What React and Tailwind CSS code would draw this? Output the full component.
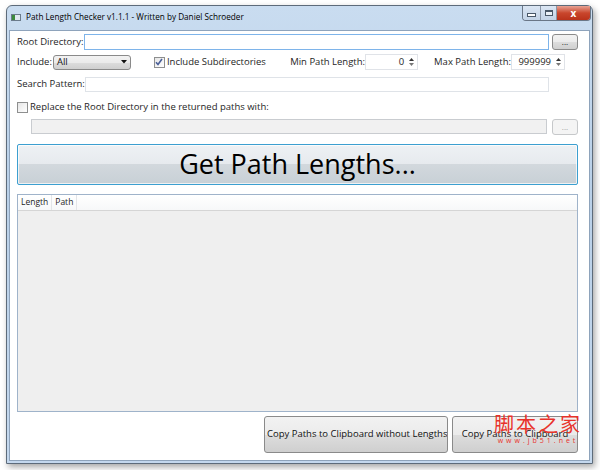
import React from "react";

function Btn({ children, className = "", disabled }) {
  return (
    <div
      className={`flex items-center justify-center rounded-[3px] border ${
        disabled
          ? "border-[#c6c8ca] bg-[#f4f4f4] text-[#a0a0a0]"
          : "border-[#8a8a8a] bg-[linear-gradient(#f2f2f2_0%,#ebebeb_50%,#dddddd_50%,#cfcfcf_100%)] text-[#111]"
      } ${className}`}
    >
      {children}
    </div>
  );
}

function TextBox({ className = "", focused, disabled }) {
  return (
    <div
      className={`h-full border ${
        focused
          ? "border-[#7eb4ea]"
          : disabled
          ? "border-[#c9ccd0] bg-[#f1f1f1]"
          : "border-[#dfe3e8]"
      } ${disabled ? "" : "bg-white"} ${className}`}
    />
  );
}

function Spinner({ value, className = "" }) {
  return (
    <div className={`flex h-[16px] shrink-0 items-center border border-[#e0e3e8] bg-white ${className}`}>
      <span className="flex-1 pr-[3px] text-right">{value}</span>
      <div className="flex w-[10px] flex-col items-center gap-[2px] pr-[2px]">
        <svg width="5" height="3" viewBox="0 0 5 3"><path d="M0 3 L2.5 0 L5 3Z" fill="#333" /></svg>
        <svg width="5" height="3" viewBox="0 0 5 3"><path d="M0 0 L2.5 3 L5 0Z" fill="#777" /></svg>
      </div>
    </div>
  );
}

function Check({ checked }) {
  return (
    <div className="flex h-[11px] w-[11px] shrink-0 items-center justify-center border border-[#8e8f8f] bg-[linear-gradient(135deg,#e6e6e6,#ffffff)]">
      {checked && (
        <svg width="8" height="8" viewBox="0 0 8 8">
          <path d="M1 4.2 L3 6.5 L7 1" stroke="#4a5f97" strokeWidth="1.6" fill="none" />
        </svg>
      )}
    </div>
  );
}

export default function App() {
  return (
    <div
      className="relative h-[470px] w-[600px] overflow-hidden whitespace-nowrap bg-white text-[9.5px] text-[#1e1e1e]"
      style={{ fontFamily: '"Open Sans", "Noto Sans", sans-serif' }}
    >
      <div className="ml-[6px] mt-[5px] flex h-[459px] w-[587px] flex-col rounded-t-[6px] border border-[#5d6b7a] bg-[linear-gradient(#c9dcf0,#b9d0e8_40%,#c4d8ee)] shadow-[2px_3px_6px_rgba(0,0,0,0.35)]">
        {/* title bar */}
        <div className="flex h-[24px] items-start">
          <div className="ml-[4px] mt-[8px] flex h-[7px] w-[10px] border border-[#6b7b8b] bg-[#dfe8f0]">
            <div className="h-full w-[3px] bg-[#3c8a3c]" />
          </div>
          <span className="ml-[5px] mt-[5px] text-[8.2px] text-black">
            Path Length Checker v1.1.1 - Written by Daniel Schroeder
          </span>
          <div className="ml-auto mr-[1px] flex h-[15px] overflow-hidden rounded-b-[4px] border border-t-0 border-[#6a7686]">
            <div className="flex w-[18px] items-center justify-center border-r border-[#8a96a6] bg-[linear-gradient(#dbe6f3,#c3d3e6)]">
              <div className="mt-[4px] h-[2px] w-[7px] bg-white shadow-[0_0_0_1px_#4a5868]" />
            </div>
            <div className="flex w-[16px] items-center justify-center border-r border-[#8a96a6] bg-[linear-gradient(#dbe6f3,#c3d3e6)]">
              <div className="h-[6px] w-[8px] border border-t-2 border-[#4a5868] bg-white/60" />
            </div>
            <div className="flex w-[33px] items-center justify-center bg-[linear-gradient(#e8a293,#c9462c_50%,#b9321b)] text-[10px] font-bold text-white">
              x
            </div>
          </div>
        </div>
        {/* client */}
        <div className="mx-[2px] mb-[2px] flex flex-1 flex-col border border-[#8ea3bb] bg-white pl-[7px] pr-[11px]">
          <div className="mt-[3px] flex h-[16px] items-center">
            <span className="min-w-[67px] shrink-0">Root Directory:</span>
            <TextBox className="flex-1" focused />
            <Btn className="ml-[3px] h-[16px] w-[26px] shrink-0 text-[8px]">...</Btn>
          </div>
          <div className="mt-[4px] flex h-[16px] items-center">
            <span className="shrink-0">Include:</span>
            <Btn className="ml-[1px] h-[15px] w-[78px] shrink-0 !justify-between px-[3px]">
              <span>All</span>
              <svg width="6" height="4" viewBox="0 0 6 4"><path d="M0 0 L3 3.5 L6 0Z" fill="#111" /></svg>
            </Btn>
            <div className="ml-[23px] flex shrink-0 items-center gap-[2px]">
              <Check checked />
              <span>Include Subdirectories</span>
            </div>
            <span className="ml-auto shrink-0">Min Path Length:</span>
            <Spinner value="0" className="w-[53px]" />
            <span className="ml-[16px] shrink-0">Max Path Length:</span>
            <Spinner value="999999" className="w-[54px]" />
            <div className="w-[13px] shrink-0" />
          </div>
          <div className="mt-[7px] flex h-[15px] items-center">
            <span className="min-w-[67px] shrink-0">Search Pattern:</span>
            <TextBox className="flex-1" />
            <div className="ml-[3px] w-[26px] shrink-0" />
          </div>
          <div className="mt-[9px] flex h-[12px] items-center gap-[2px]">
            <Check />
            <span>Replace the Root Directory in the returned paths with:</span>
          </div>
          <div className="mt-[6px] flex h-[15px] items-center pl-[14px]">
            <TextBox className="flex-1" disabled />
            <Btn disabled className="ml-[5px] h-[16px] w-[26px] shrink-0 text-[8px]">...</Btn>
          </div>
          <div className="mt-[10px] flex h-[41px] items-center justify-center rounded-[2px] border border-[#3c9fd0] bg-[linear-gradient(#eef1f4_0%,#e6eaee_50%,#d2d8dd_50%,#c8d0d6_100%)] text-[27px] text-black shadow-[inset_0_0_0_1px_rgba(255,255,255,0.7)]">
            Get Path Lengths...
          </div>
          <div className="mt-[9px] flex h-[218px] flex-col border border-[#9fb3ca] bg-[#efefef]">
            <div className="flex h-[16px] border-b border-[#d5d5d5] bg-[linear-gradient(#ffffff,#f7f8f9)] text-[8.5px]">
              <span className="flex items-center border-r border-[#e3e5e8] px-[3px]">Length</span>
              <span className="flex items-center border-r border-[#e3e5e8] px-[3px]">Path</span>
            </div>
          </div>
          <div className="mt-[4px] flex h-[37px] justify-end gap-[4px]">
            <Btn className="w-[184px] overflow-hidden !justify-start pl-[2px]">
              Copy Paths to Clipboard without Lengths
            </Btn>
            <Btn className="w-[126px]">Copy Paths to Clipboard</Btn>
          </div>
        </div>
      </div>
      {/* watermark */}
      <div className="absolute left-[494px] top-[414px] flex flex-col items-center leading-none text-[#e8322a]">
        <span className="text-[20px] tracking-[2px]" style={{ fontFamily: '"Noto Sans CJK SC", sans-serif' }}>
          脚本之家
        </span>
        <span className="mt-[3px] text-[7px] tracking-[3px]">www.jb51.net</span>
      </div>
    </div>
  );
}
